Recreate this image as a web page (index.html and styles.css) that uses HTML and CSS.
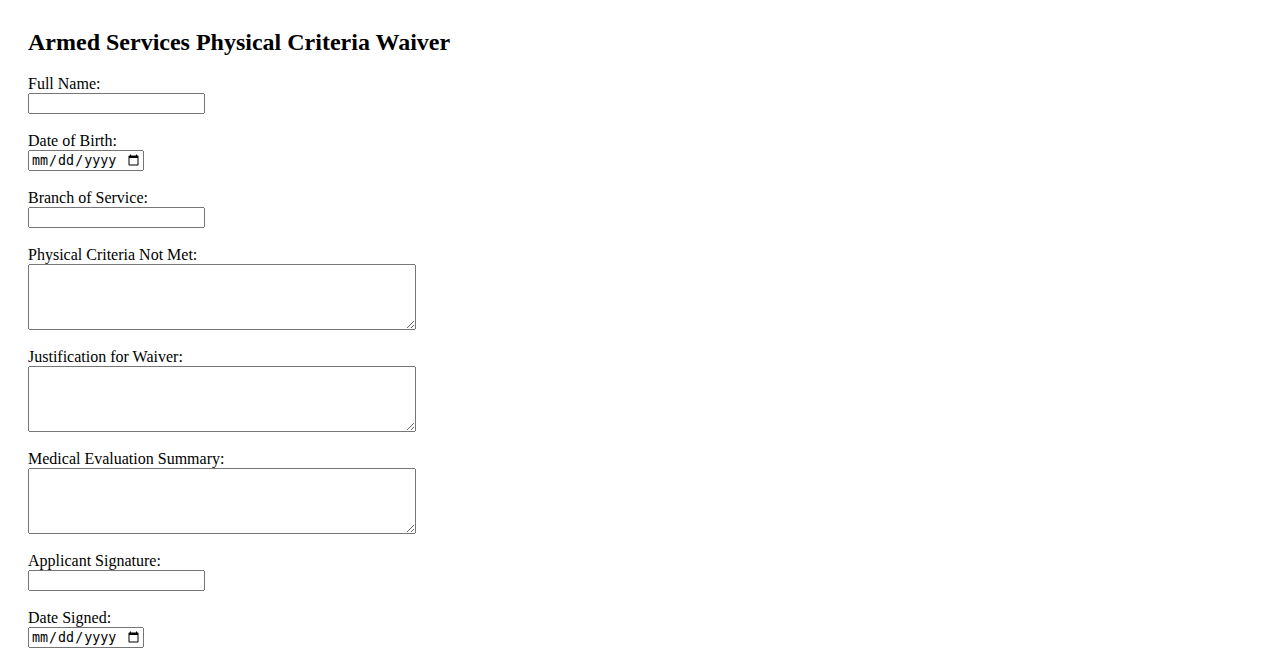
FILE: index.html
```html
<!DOCTYPE html>
<html lang="en">
<head>
    <meta charset="UTF-8">
    <meta name="viewport" content="width=device-width, initial-scale=1.0">
    <title>Armed Services Physical Criteria Waiver</title>
    <link rel="stylesheet" href="styles.css">
</head>
<body>
    <div class="page">
        <h2 class="title">Armed Services Physical Criteria Waiver</h2>
        <form class="waiver-form">
            <div class="field">
                <label for="fullName">Full Name:</label>
                <input type="text" id="fullName" name="fullName" class="text-input">
            </div>
            <div class="field">
                <label for="dob">Date of Birth:</label>
                <input type="date" id="dob" name="dob" class="date-input">
            </div>
            <div class="field">
                <label for="branch">Branch of Service:</label>
                <input type="text" id="branch" name="branch" class="text-input">
            </div>
            <div class="field">
                <label for="criteria">Physical Criteria Not Met:</label>
                <textarea id="criteria" name="criteria" rows="4" cols="50" class="area-input"></textarea>
            </div>
            <div class="field">
                <label for="justification">Justification for Waiver:</label>
                <textarea id="justification" name="justification" rows="4" cols="50" class="area-input"></textarea>
            </div>
            <div class="field">
                <label for="medical">Medical Evaluation Summary:</label>
                <textarea id="medical" name="medical" rows="4" cols="50" class="area-input"></textarea>
            </div>
            <div class="field">
                <label for="signature">Applicant Signature:</label>
                <input type="text" id="signature" name="signature" class="text-input">
            </div>
            <div class="field">
                <label for="dateSigned">Date Signed:</label>
                <input type="date" id="dateSigned" name="dateSigned" class="date-input">
            </div>
        </form>
    </div>
</body>
</html>
```

FILE: styles.css
```css
body {
    font-family: "Liberation Serif", "Times New Roman", serif;
    font-size: 16px;
    color: #000;
    background-color: #fff;
    margin: 8px;
}

.page {
    padding: 20px;
}

.title {
    font-size: 24px;
    line-height: 28px;
    margin: 0 0 19px;
}

.waiver-form {
    display: flex;
    flex-direction: column;
    gap: 18px;
}

.field {
    display: flex;
    flex-direction: column;
    align-items: flex-start;
}

.field label {
    line-height: 18px;
}

.text-input,
.date-input,
.area-input {
    box-sizing: border-box;
    margin: 0;
}

.text-input {
    width: 177px;
    height: 21px;
}

.date-input {
    width: 116px;
    height: 21px;
}

.area-input {
    width: 388px;
    height: 66px;
}
```
